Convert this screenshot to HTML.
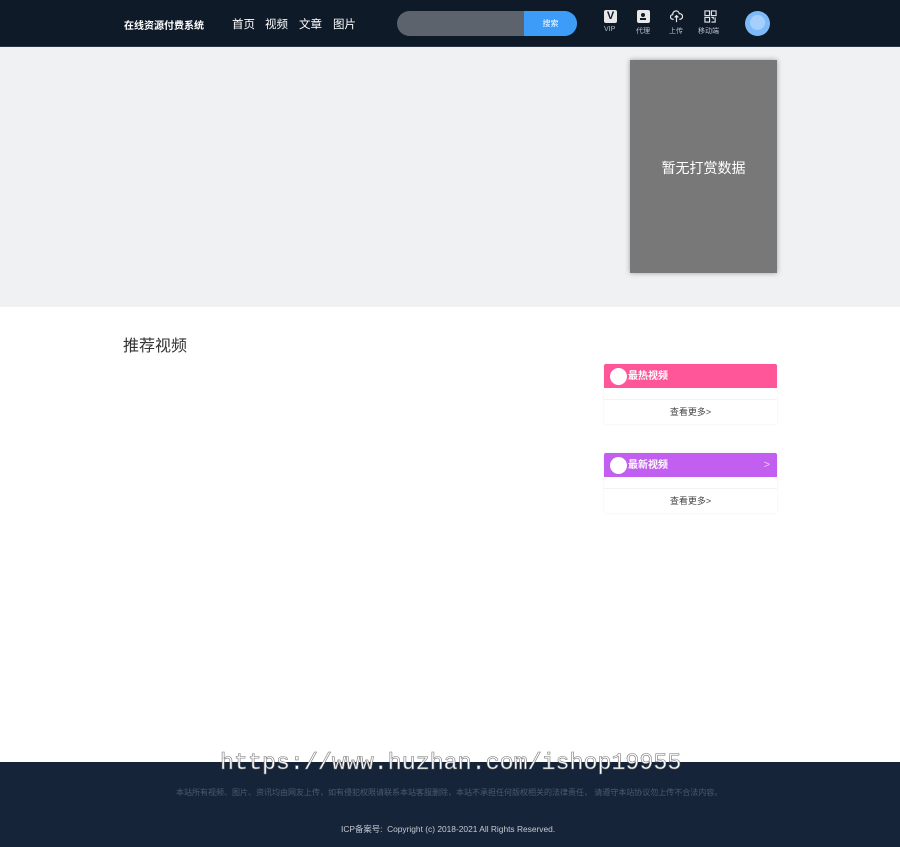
<!DOCTYPE html>
<html><head><meta charset="utf-8"><style>
*{margin:0;padding:0;box-sizing:border-box}
body{width:900px;height:847px;overflow:hidden;background:#fff;font-family:"Liberation Sans","Noto Sans CJK SC",sans-serif;position:relative}
.hd{position:absolute;left:0;top:0;width:900px;height:47px;background:#0f1a29;border-bottom:1px solid #2a3545}
.a{position:absolute;white-space:nowrap}
.band{position:absolute;left:0;top:47px;width:900px;height:260px;background:#f0f1f3}
.box{position:absolute;left:630px;top:60px;width:147px;height:213px;background:#787878;box-shadow:0 0 5px rgba(0,0,0,.35);color:#fff;font-size:14px;text-align:center;line-height:216px}
.card{position:absolute;left:604px;width:173px;height:60px;background:#fff;box-shadow:0 0 2px rgba(0,0,0,.08)}
.card .t{height:24px;border-radius:2px 2px 0 0;color:#fff;font-size:10px;line-height:25px;padding-left:24px;position:relative;font-weight:bold}
.card .t i{position:absolute;left:6px;top:4px;width:17px;height:17px;border-radius:50%;background:#fff}
.card .m{border-top:1px solid #f3f3f3;margin-top:11px;text-align:center;font-size:9px;color:#444;line-height:24px}
.ft{position:absolute;left:0;top:762px;width:900px;height:85px;background:#16243a}
.ic{position:absolute;top:10px;width:13px;height:13px}
.lab{position:absolute;top:26px;font-size:7px;color:#b8bec8}
.nv{position:absolute;top:16px;color:#fff;font-size:11.5px}
</style></head><body>
<div class="hd">
<div class="a" style="left:124px;top:17px;color:#fff;font-size:10px;font-weight:bold">在线资源付费系统</div>
<div class="nv" style="left:232px">首页</div><div class="nv" style="left:265px">视频</div><div class="nv" style="left:299px">文章</div><div class="nv" style="left:333px">图片</div>
<div class="a" style="left:397px;top:11px;width:180px;height:25px;border-radius:13px;background:#5c636d;overflow:hidden"><div style="position:absolute;right:0;top:0;width:53px;height:25px;background:#3d9cf7;color:#fff;font-size:8px;text-align:center;line-height:25px">搜索</div></div>
<div class="ic" style="left:604px;background:#e8e8e8;border-radius:2px;color:#0f1a29;font-size:11px;font-weight:bold;line-height:13px;text-align:center">V</div>
<div class="lab" style="left:604px">VIP</div>
<div class="ic" style="left:637px;background:#e8e8e8;border-radius:2px"><div style="position:absolute;left:4px;top:3px;width:4px;height:4px;border-radius:50%;background:#0f1a29"></div><div style="position:absolute;left:3px;top:8px;width:6px;height:2px;background:#0f1a29"></div></div>
<div class="lab" style="left:636px">代理</div>
<svg class="ic" style="left:670px" viewBox="0 0 14 14" fill="none" stroke="#e8e8e8" stroke-width="1.3"><path d="M4 10H3a2.5 2.5 0 0 1 0-5 3.5 3.5 0 0 1 7-1 3 3 0 0 1 1 6h-1M7 6v7M5 8l2-2 2 2"/></svg>
<div class="lab" style="left:669px">上传</div>
<svg class="ic" style="left:704px" viewBox="0 0 14 14" fill="none" stroke="#e8e8e8" stroke-width="1.2"><rect x="1" y="1" width="5" height="5"/><rect x="8" y="1" width="5" height="5"/><rect x="1" y="8" width="5" height="5"/><path d="M8 8h2v2M12 8v5h-4"/></svg>
<div class="lab" style="left:698px">移动端</div>
<div class="a" style="left:745px;top:11px;width:25px;height:25px;border-radius:50%;background:#7cbaf9"><div style="position:absolute;left:5px;top:4px;width:15px;height:15px;border-radius:50%;background:#a6d0fb"></div></div>
</div>
<div class="band"></div>
<div class="box">暂无打赏数据</div>
<div class="a" style="left:123px;top:332px;font-size:16px;color:#333">推荐视频</div>
<div class="card" style="top:364px"><div class="t" style="background:#ff5599"><i></i>最热视频</div><div class="m">查看更多&gt;</div></div>
<div class="card" style="top:453px"><div class="t" style="background:#c35ff0"><i></i>最新视频<span style="position:absolute;right:7px;top:0;font-weight:normal;font-size:11px;color:#e9c9f9">&gt;</span></div><div class="m">查看更多&gt;</div></div>
<div class="ft"></div>
<div class="a" style="left:220px;top:750px;font-family:'Liberation Mono',monospace;font-size:23.3px;color:#fff;-webkit-text-stroke:0.6px #777">https://www.huzhan.com/ishop19955</div>
<div class="a" style="left:176px;top:787px;font-size:8px;color:#4d5a6c">本站所有视频、图片、资讯均由网友上传，如有侵犯权限请联系本站客服删除，本站不承担任何版权相关的法律责任， 请遵守本站协议勿上传不合法内容。</div>
<div class="a" style="left:341px;top:823px;font-size:8.4px;color:#c5cad2">ICP备案号:&nbsp; Copyright (c) 2018-2021 All Rights Reserved.</div>
</body></html>
